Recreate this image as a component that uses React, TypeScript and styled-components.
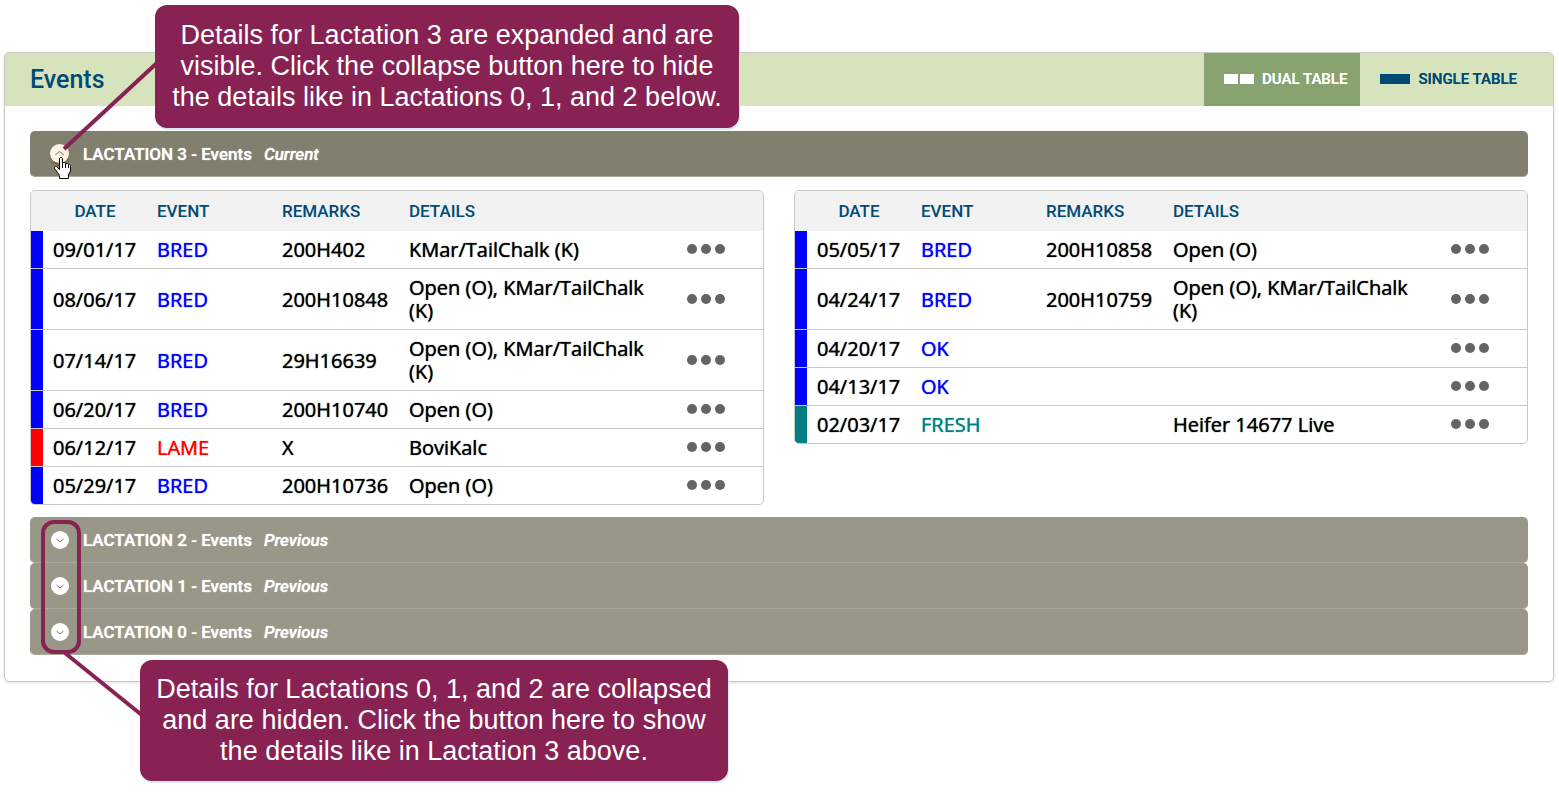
import React, { useState } from "react";
import styled, { createGlobalStyle } from "styled-components";

const GlobalStyle = createGlobalStyle`
  * { box-sizing: border-box; }
  body {
    margin: 0;
    background: #fff;
    color: #000;
    font-family: "Open Sans", "Noto Sans", sans-serif;
  }
  button { font: inherit; border: 0; padding: 0; background: none; cursor: pointer; }
`;

const navy = "#004b76";
const plum = "#872253";

const Page = styled.main`
  position: relative;
  padding: 52px 5px 115px 4px;
`;

const Panel = styled.section`
  border: 1px solid #c8c8c8;
  border-radius: 5px;
  box-shadow: 0 1px 3px #e4e4d8;
  overflow: hidden;
`;

const PanelHeader = styled.header`
  display: flex;
  justify-content: space-between;
  height: 53px;
  padding: 0 16px 0 25px;
  background: #d7e3bc;
`;

const Title = styled.h2`
  margin: 0;
  color: ${navy};
  font: 500 25px/53px Roboto, sans-serif;
`;

const Tabs = styled.div`
  display: flex;
`;

const Tab = styled.button<{ $active?: boolean }>`
  && {
    display: flex;
    align-items: center;
    gap: 8px;
    padding: 0 ${(p) => (p.$active ? 13 : 20)}px 2px 20px;
    background: ${(p) => (p.$active ? "#88a270" : "transparent")};
    color: ${(p) => (p.$active ? "#fff" : navy)};
    font: 500 15px/20px Roboto, sans-serif;
    text-shadow: 0 0 0 currentColor;
  }
`;

const TabIcon = styled.span`
  display: flex;
  gap: 2px;
  width: 30px;
  height: 10px;
  i { flex: 1; background: currentColor; }
`;

const PanelBody = styled.div`
  padding: 25px 25px 26px;
`;

const Bar = styled.div<{ $open?: boolean }>`
  display: flex;
  align-items: center;
  height: 46px;
  padding-left: ${(p) => (p.$open ? 20 : 21)}px;
  border-bottom: 1px solid #a9a89b;
  border-radius: 5px;
  background: ${(p) => (p.$open ? "#81806e" : "#999888")};
  color: #fff;
  font: 500 17px/24px Roboto, sans-serif;
  text-shadow: 0 0 1px currentColor;
`;

const BarTitle = styled.h3`
  margin: 0 0 0 14px;
  font: inherit;
`;

const BarState = styled.em`
  margin-left: 12px;
`;

const Toggle = styled.button<{ $open?: boolean }>`
  && {
    display: flex;
    width: ${(p) => (p.$open ? 19 : 18)}px;
    height: ${(p) => (p.$open ? 19 : 18)}px;
    border-radius: 50%;
    background: ${(p) => (p.$open ? "#fdf3e4" : "#fff")};
    box-shadow: ${(p) => (p.$open ? "0 3px 2px #7a6a50" : "none")};
  }
`;

const Tables = styled.div`
  display: grid;
  grid-template-columns: 1fr 1fr;
  align-items: start;
  gap: 30px;
  margin: 13px 0 12px;
`;

const TableFrame = styled.div`
  border: 1px solid #c8c8c8;
  border-radius: 5px;
  overflow: hidden;
`;

const Table = styled.table`
  width: 100%;
  table-layout: fixed;
  border-spacing: 0;
  font-size: 20px;
  line-height: 23px;
`;

const Col = styled.col<{ $w?: number }>`
  width: ${(p) => (p.$w ? `${p.$w}px` : "auto")};
`;

const Head = styled.th<{ $center?: boolean }>`
  height: 40px;
  padding: 0 0 0 ${(p) => (p.$center ? 0 : 10)}px;
  background: #f2f2f2;
  color: ${navy};
  font: 500 17px/20px Roboto, sans-serif;
  text-align: ${(p) => (p.$center ? "center" : "left")};
`;

const Cell = styled.td<{ $color?: string }>`
  padding: 7px 0 7px 10px;
  border-bottom: 1px solid #c8c8c8;
  color: ${(p) => p.$color || "#000"};
  text-shadow: 0 0 1px currentColor;
  tr:last-child > & { border-bottom: 0; }
`;

const Marker = styled(Cell)`
  background: ${(p) => p.$color};
`;

const MenuCell = styled(Cell)`
  padding: 0;
  text-align: center;
`;

const MenuButton = styled.button`
  && {
    display: inline-flex;
    gap: 4px;
    padding: 2px 0 7px;
    vertical-align: middle;
  }
  i { width: 10px; height: 10px; border-radius: 50%; background: #646464; }
`;

const Callout = styled.aside<{ $top: number; $left: number; $height: number; $width: number }>`
  position: absolute;
  display: flex;
  align-items: center;
  top: ${(p) => p.$top}px;
  left: ${(p) => p.$left}px;
  width: ${(p) => p.$width}px;
  height: ${(p) => p.$height}px;
  border-radius: 12px;
  background: ${plum};
  box-shadow: 1px 2px 1px #d6e6f5;
  color: #fff;
  font: 27px/31px "Liberation Sans", Arial, sans-serif;
  text-align: center;
  p { flex: 1; margin: 0; white-space: nowrap; }
`;

const Overlay = styled.svg`
  position: absolute;
  top: 0;
  left: 0;
  pointer-events: none;
`;

type Row = { date: string; event: string; remarks?: string; details?: string; color: string };

const BLUE = "#0000ff";
const left: Row[] = [
  { date: "09/01/17", event: "BRED", remarks: "200H402", details: "KMar/TailChalk (K)", color: BLUE },
  { date: "08/06/17", event: "BRED", remarks: "200H10848", details: "Open (O), KMar/TailChalk (K)", color: BLUE },
  { date: "07/14/17", event: "BRED", remarks: "29H16639", details: "Open (O), KMar/TailChalk (K)", color: BLUE },
  { date: "06/20/17", event: "BRED", remarks: "200H10740", details: "Open (O)", color: BLUE },
  { date: "06/12/17", event: "LAME", remarks: "X", details: "BoviKalc", color: "#ff0000" },
  { date: "05/29/17", event: "BRED", remarks: "200H10736", details: "Open (O)", color: BLUE },
];
const right: Row[] = [
  { date: "05/05/17", event: "BRED", remarks: "200H10858", details: "Open (O)", color: BLUE },
  { date: "04/24/17", event: "BRED", remarks: "200H10759", details: "Open (O), KMar/TailChalk (K)", color: BLUE },
  { date: "04/20/17", event: "OK", color: BLUE },
  { date: "04/13/17", event: "OK", color: BLUE },
  { date: "02/03/17", event: "FRESH", details: "Heifer 14677 Live", color: "#008080" },
];

function EventTable({ rows }: { rows: Row[] }) {
  return (
    <TableFrame>
      <Table>
        <colgroup>
          <Col $w={12} />
          <Col $w={104} />
          <Col $w={125} />
          <Col $w={127} />
          <Col />
          <Col $w={115} />
        </colgroup>
        <thead>
          <tr>
            <Head />
            <Head $center>DATE</Head>
            <Head>EVENT</Head>
            <Head>REMARKS</Head>
            <Head>DETAILS</Head>
            <Head />
          </tr>
        </thead>
        <tbody>
          {rows.map((r) => (
            <tr key={r.date}>
              <Marker $color={r.color} />
              <Cell>{r.date}</Cell>
              <Cell $color={r.color}>{r.event}</Cell>
              <Cell>{r.remarks}</Cell>
              <Cell>{r.details}</Cell>
              <MenuCell>
                <MenuButton type="button" aria-label={`Actions for ${r.date}`}>
                  <i /><i /><i />
                </MenuButton>
              </MenuCell>
            </tr>
          ))}
        </tbody>
      </Table>
    </TableFrame>
  );
}

type BarProps = { n: number; state: string; open?: boolean; onToggle?: () => void };

function LactationBar({ n, state, open, onToggle }: BarProps) {
  return (
    <Bar $open={open}>
      <Toggle
        type="button"
        $open={open}
        aria-expanded={!!open}
        aria-label={`Lactation ${n} details`}
        onClick={onToggle}
      >
        <svg width="100%" height="100%" viewBox="0 0 18 18" fill="none" stroke={open ? "#a08a72" : "#77776c"}>
          <path d={open ? "M5 10.500l4-3.500 4 3.500" : "M5.500 8l3.500 3L12.500 8"} />
        </svg>
      </Toggle>
      <BarTitle>LACTATION {n} - Events</BarTitle>
      <BarState>{state}</BarState>
    </Bar>
  );
}

export default function App() {
  const [open, setOpen] = useState(true);
  return (
    <Page>
      <GlobalStyle />
      <Panel>
        <PanelHeader>
          <Title>Events</Title>
          <Tabs>
            <Tab type="button" $active><TabIcon><i /><i /></TabIcon>DUAL TABLE</Tab>
            <Tab type="button"><TabIcon><i /></TabIcon>SINGLE TABLE</Tab>
          </Tabs>
        </PanelHeader>
        <PanelBody>
          <LactationBar n={3} state="Current" open={open} onToggle={() => setOpen(!open)} />
          {open && (
            <Tables>
              <EventTable rows={left} />
              <EventTable rows={right} />
            </Tables>
          )}
          <LactationBar n={2} state="Previous" />
          <LactationBar n={1} state="Previous" />
          <LactationBar n={0} state="Previous" />
        </PanelBody>
      </Panel>
      <Overlay width="180" height="740" aria-hidden="true" fill="none" stroke={plum} strokeWidth="4">
        <path d="M158 62L64 149" />
        <path d="M65 653L143 716" />
        <rect x="43" y="522" width="36" height="130" rx="11" />
        <g transform="translate(54 157)" stroke="#000" strokeWidth="1">
          <path
            fill="#fff"
            d="M5.500 1.500L6.500 .5H7.500L8.500 1.500V5.500H10.500L11.500 6.500H13.500L14.500 7.500H15.500L16.500 8.500V14L14.500 17.500V21.500H5.500V18.500L3.500 15.500L.5 11.500V10.500L1.500 9.500H2.500L5.500 12.500Z"
          />
          <path d="M8.500 5.500V11M11.500 6.500V11M14.500 7.500V11" />
        </g>
      </Overlay>
      <Callout $top={5} $left={155} $width={584} $height={123}>
        <p>Details for Lactation 3 are expanded and are<br />visible. Click the collapse button here to hide<br />the details like in Lactations 0, 1, and 2 below.</p>
      </Callout>
      <Callout $top={660} $left={140} $width={588} $height={121}>
        <p>Details for Lactations 0, 1, and 2 are collapsed<br />and are hidden. Click the button here to show<br />the details like in Lactation 3 above.</p>
      </Callout>
    </Page>
  );
}
